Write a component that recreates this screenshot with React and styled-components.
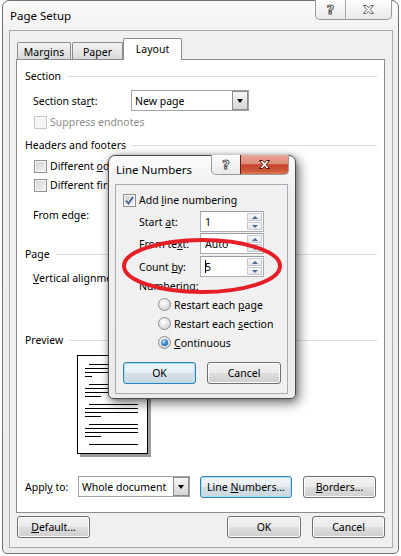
import React from "react";
import styled, { createGlobalStyle } from "styled-components";

const GlobalStyle = createGlobalStyle`
  html, body {
    margin: 0;
    padding: 0;
    background: #ffffff;
  }
  body {
    font-family: "Noto Sans", "Open Sans", sans-serif;
    font-size: 10.5px;
    color: #000;
  }
  #root {
    width: 401px;
    height: 556px;
    overflow: hidden;
  }
`;

const Frame = styled.div`
  box-sizing: border-box;
  display: flex;
  flex-direction: column;
  border: 1px solid ${({ $active }) => ($active ? "#4a4a4a" : "#707070")};
  border-radius: 7px 7px 5px 5px;
  background: linear-gradient(#fbfbfb, #efefef 36px, #ececec);
`;

const Window = styled(Frame)`
  position: relative;
  width: 397px;
  height: 554px;
  margin-left: 2px;
`;

const Dialog = styled(Frame)`
  position: absolute;
  left: 105px;
  top: 154px;
  width: 188px;
  height: 244px;
  z-index: 3;
  box-shadow: 3px 4px 12px rgba(0, 0, 0, 0.55), 0 0 4px rgba(0, 0, 0, 0.25);
`;

const TitleBar = styled.div`
  display: flex;
  justify-content: space-between;
  align-items: flex-start;
  flex: none;
  height: ${({ $h }) => $h}px;
`;

const Title = styled.div`
  padding: ${({ $top }) => $top}px 0 0 7px;
  line-height: 16px;
  font-size: 11.5px;
  white-space: nowrap;
`;

const Captions = styled.div`
  display: flex;
  margin: -1px 6px 0 0;
  height: 20px;
  box-sizing: border-box;
  border: 1px solid #9a9a9a;
  border-top: none;
  border-radius: 0 0 5px 5px;
  background: linear-gradient(#fdfdfd, #e9e9e9);
  overflow: hidden;
`;

const CaptionButton = styled.div`
  width: ${({ $w }) => $w}px;
  display: flex;
  align-items: center;
  justify-content: center;
  border-left: ${({ $divider }) => ($divider ? "1px solid #a8a8a8" : "none")};
`;

const CloseButton = styled(CaptionButton)`
  margin: 0 -1px -1px 0;
  border: 1px solid #6b1d12;
  border-top: none;
  border-radius: 0 0 5px 0;
  background: linear-gradient(#e9a799 0%, #dd8b78 45%, #c8432c 52%, #cf5a3a 85%, #e07a55 100%);
`;

const HelpGlyph = styled.span`
  font-family: "DejaVu Sans", sans-serif;
  font-weight: bold;
  font-size: 13px;
  line-height: 13px;
  color: #fff;
  -webkit-text-stroke: 1px #555;
`;

const Client = styled.div`
  box-sizing: border-box;
  flex: none;
  height: ${({ $h }) => $h}px;
  margin: 0 ${({ $mr }) => $mr}px ${({ $mb }) => $mb}px 6px;
  border: 1px solid #a5acb5;
  background: #f0f0f0;
  padding: ${({ $pad }) => $pad};
  display: flex;
  flex-direction: column;
`;

const TabRow = styled.div`
  display: flex;
  align-items: flex-end;
  height: 21px;
  padding-left: 1px;
  flex: none;
`;

const Tab = styled.div`
  position: relative;
  box-sizing: border-box;
  width: ${({ $w }) => $w}px;
  margin-left: ${({ $ml }) => $ml || 0}px;
  height: ${({ $active }) => ($active ? 22 : 17)}px;
  margin-bottom: ${({ $active }) => ($active ? -1 : 0)}px;
  padding-top: ${({ $active }) => ($active ? 3 : 2)}px;
  border: 1px solid #898c95;
  border-bottom: none;
  border-radius: 2px 2px 0 0;
  background: ${({ $active }) =>
    $active ? "#fff" : "linear-gradient(#f3f3f3, #e6e6e6 50%, #d9d9d9)"};
  text-align: center;
  line-height: 15px;
`;

const Panel = styled.div`
  box-sizing: border-box;
  height: 454px;
  background: #fff;
  border: 1px solid #898c95;
  padding: 7px 7px 0 8px;
  display: flex;
  flex-direction: column;
  flex: none;
`;

const Row = styled.div`
  display: flex;
  align-items: center;
  flex: none;
  height: ${({ $h }) => $h || 18}px;
  margin-top: ${({ $mt }) => $mt || 0}px;
  padding-left: ${({ $indent }) => $indent || 0}px;
  white-space: nowrap;
`;

const Rule = styled.div`
  flex: 1;
  height: 1px;
  margin-left: 6px;
  background: #d5dfe5;
`;

const Label = styled.span`
  flex: none;
  width: ${({ $w }) => ($w ? `${$w}px` : "auto")};
  color: ${({ $disabled }) => ($disabled ? "#8d8d8d" : "#000")};
  margin-left: ${({ $ml }) => $ml || 0}px;
`;

const Select = styled.div`
  box-sizing: border-box;
  flex: none;
  width: ${({ $w }) => $w}px;
  height: 21px;
  display: flex;
  align-items: center;
  border: 1px solid #a4a4a4;
  background: #fff;
  padding: 0 1px 0 3px;
`;

const SelectText = styled.span`
  flex: 1;
`;

const DropButton = styled.div`
  box-sizing: border-box;
  width: 16px;
  height: 19px;
  margin-right: -1px;
  border: 1px solid #8a8a8a;
  background: linear-gradient(#f6f6f6, #e4e4e4 50%, #d6d6d6);
  display: flex;
  align-items: center;
  justify-content: center;
  &::after {
    content: "";
    border-left: 3.5px solid transparent;
    border-right: 3.5px solid transparent;
    border-top: 4px solid #000;
  }
`;

const CheckBox = styled.span`
  box-sizing: border-box;
  flex: none;
  width: 13px;
  height: 13px;
  border: 1px solid ${({ $disabled }) => ($disabled ? "#c9c9c9" : "#8e8f8f")};
  box-shadow: inset 0 0 0 1px #f7f7f7;
  background: ${({ $disabled }) =>
    $disabled ? "#f4f4f4" : "linear-gradient(135deg, #cdd0d5, #f7f7f7)"};
  display: flex;
  align-items: center;
  justify-content: center;
`;

const RadioDot = styled.span`
  box-sizing: border-box;
  flex: none;
  width: 13px;
  height: 13px;
  border-radius: 50%;
  border: 1px solid #8e8f8f;
  background: radial-gradient(circle at 40% 35%, #ffffff, #d4d4d4 75%);
  display: flex;
  align-items: center;
  justify-content: center;
  &::after {
    content: "";
    display: ${({ $on }) => ($on ? "block" : "none")};
    width: 7px;
    height: 7px;
    border-radius: 50%;
    background: radial-gradient(circle at 40% 35%, #b9e4fb, #2d7ec4 55%, #1a4f8c);
  }
`;

const Button = styled.button`
  box-sizing: border-box;
  flex: none;
  width: ${({ $w }) => $w}px;
  height: 22px;
  margin-left: ${({ $ml }) => $ml || 0}px;
  padding: 0;
  font: inherit;
  color: #000;
  border: 1px solid ${({ $focus }) => ($focus ? "#3c7fb1" : "#707070")};
  border-radius: 3px;
  background: ${({ $focus }) =>
    $focus
      ? "linear-gradient(#f0f5f8, #e6edf1 50%, #d6e0e6 51%, #cbd6dd)"
      : "linear-gradient(#f2f2f2, #ebebeb 50%, #dddddd 51%, #cfcfcf)"};
  box-shadow: inset 0 0 0 1px ${({ $focus }) => ($focus ? "#9fe2fb" : "#fbfbfb")};
`;

const Spin = styled.div`
  box-sizing: border-box;
  flex: none;
  width: 64px;
  height: 21px;
  display: flex;
  padding: 1px;
  border: 1px solid #abadb3;
  border-top-color: #9a9ca3;
  background: #fff;
`;

const SpinValue = styled.span`
  flex: 1;
  display: flex;
  align-items: center;
  padding-left: 3px;
`;

const Caret = styled.span`
  width: 1px;
  height: 13px;
  background: #000;
  margin-right: -1px;
`;

const SpinButtons = styled.div`
  width: 15px;
  display: flex;
  flex-direction: column;
  gap: 1px;
`;

const SpinArrow = styled.div`
  flex: 1;
  box-sizing: border-box;
  border: 1px solid #c3cad3;
  background: linear-gradient(#f7f7f7, #e4e6e9);
  display: flex;
  align-items: center;
  justify-content: center;
  &::after {
    content: "";
    border-left: 3px solid transparent;
    border-right: 3px solid transparent;
    ${({ $down }) =>
      $down ? "border-top: 3px solid #4b6a9a;" : "border-bottom: 3px solid #4b6a9a;"}
  }
`;

const Footer = styled.div`
  display: flex;
  margin-top: 3px;
  padding-left: 1px;
`;

const Spacer = styled.div`
  flex: 1;
`;

const PreviewPage = styled.div`
  box-sizing: border-box;
  flex: none;
  width: 71px;
  height: 99px;
  margin: 6px 0 0 52px;
  border: 1px solid #000;
  background: #fff;
  box-shadow: 3px 3px 0 #9c9c9c;
`;

const Annotation = styled.svg`
  position: absolute;
  left: 115px;
  top: 235px;
  z-index: 4;
  pointer-events: none;
`;

const u = (s) => <u>{s}</u>;

function CloseX({ fill, stroke }) {
  return (
    <svg width="13" height="11" viewBox="0 0 13 11">
      <path
        d="M1.5 1.5 H4.5 L6.5 3.8 L8.5 1.5 H11.5 L8.2 5.5 L11.5 9.5 H8.5 L6.5 7.2 L4.5 9.5 H1.5 L4.8 5.5 Z"
        fill={fill}
        stroke={stroke}
        strokeWidth="1"
        strokeLinejoin="round"
      />
    </svg>
  );
}

function Tick() {
  return (
    <svg width="9" height="9" viewBox="0 0 9 9">
      <path d="M1 4.5 L3.5 7.5 L8 1" fill="none" stroke="#4a5f97" strokeWidth="1.8" />
    </svg>
  );
}

function Header({ children, mt }) {
  return (
    <Row $mt={mt}>
      <Label>{children}</Label>
      <Rule />
    </Row>
  );
}

function Check({ checked, disabled, children, mt, indent, h }) {
  return (
    <Row $mt={mt} $indent={indent} $h={h}>
      <CheckBox $disabled={disabled}>{checked && <Tick />}</CheckBox>
      <Label $ml={3} $disabled={disabled}>
        {children}
      </Label>
    </Row>
  );
}

function Radio({ on, children, mt }) {
  return (
    <Row $mt={mt} $indent={42} $h={19}>
      <RadioDot $on={on} />
      <Label $ml={3}>{children}</Label>
    </Row>
  );
}

function Spinner({ label, value, caret, mt }) {
  return (
    <Row $mt={mt} $indent={23} $h={21}>
      <Label $w={61}>{label}</Label>
      <Spin>
        <SpinValue>
          {caret && <Caret />}
          {value}
        </SpinValue>
        <SpinButtons>
          <SpinArrow />
          <SpinArrow $down />
        </SpinButtons>
      </Spin>
    </Row>
  );
}

const previewLines = [];
[9, 29, 49, 69].forEach((y, i) => {
  previewLines.push([12, y, 61]);
  previewLines.push([8, y + 4, 61]);
  previewLines.push([8, y + 8, 61]);
  previewLines.push([8, y + 12, i === 0 ? 15 : 24]);
});
previewLines.push([12, 89, 61]);

function Preview() {
  return (
    <PreviewPage>
      <svg width="69" height="97" viewBox="0 0 69 97">
        {previewLines.map(([x1, y, x2], i) => (
          <line key={i} x1={x1 - 1} x2={x2 - 1} y1={y - 0.5} y2={y - 0.5} stroke="#000" strokeWidth="1" />
        ))}
      </svg>
    </PreviewPage>
  );
}

function LineNumbersDialog() {
  return (
    <Dialog $active>
      <TitleBar $h={28}>
        <Title $top={6}>Line Numbers</Title>
        <Captions>
          <CaptionButton $w={28}>
            <HelpGlyph>?</HelpGlyph>
          </CaptionButton>
          <CloseButton $w={47}>
            <CloseX fill="#fff" stroke="#4a1208" />
          </CloseButton>
        </Captions>
      </TitleBar>
      <Client $h={210} $mr={7} $mb={4} $pad="0">
        <Check checked mt={6} indent={7}>
          Add {u("l")}ine numbering
        </Check>
        <Spinner mt={2} label={<>Start {u("a")}t:</>} value="1" />
        <Spinner mt={1} label={<>From te{u("x")}t:</>} value="Auto" />
        <Spinner mt={2} label={<>Count {u("b")}y:</>} value="5" caret />
        <Row $indent={23} $h={17}>
          <Label>Numbering:</Label>
        </Row>
        <Radio mt={1}>Restart each {u("p")}age</Radio>
        <Radio>Restart each {u("s")}ection</Radio>
        <Radio on>{u("C")}ontinuous</Radio>
        <Row $mt={10} $indent={7} $h={22}>
          <Button $w={73} $focus>
            OK
          </Button>
          <Button $w={74} $ml={11}>
            Cancel
          </Button>
        </Row>
      </Client>
    </Dialog>
  );
}

export default function App() {
  return (
    <>
      <GlobalStyle />
      <Window>
        <TitleBar $h={29}>
          <Title $top={7}>Page Setup</Title>
          <Captions>
            <CaptionButton $w={29}>
              <HelpGlyph>?</HelpGlyph>
            </CaptionButton>
            <CaptionButton $w={45} $divider>
              <CloseX fill="#fff" stroke="#666" />
            </CaptionButton>
          </Captions>
        </TitleBar>
        <Client $h={518} $mr={5} $mb={5} $pad="7px 7px 0 6px">
          <TabRow>
            <Tab $w={54}>Margins</Tab>
            <Tab $w={51} $ml={1}>
              Paper
            </Tab>
            <Tab $w={59} $active>
              Layout
            </Tab>
          </TabRow>
          <Panel>
            <Header>Section</Header>
            <Row $mt={5} $indent={8} $h={21}>
              <Label $w={98}>Section sta{u("r")}t:</Label>
              <Select $w={118}>
                <SelectText>New page</SelectText>
                <DropButton />
              </Select>
            </Row>
            <Check disabled mt={2} indent={9}>
              Suppress endnotes
            </Check>
            <Header mt={5}>Headers and footers</Header>
            <Check mt={3} indent={9}>
              Different {u("o")}dd and even
            </Check>
            <Check mt={1} indent={9}>
              Different first page
            </Check>
            <Row $mt={12} $indent={8}>
              <Label>From edge:</Label>
            </Row>
            <Header mt={21}>Page</Header>
            <Row $mt={6} $indent={8}>
              <Label $w={98}>{u("V")}ertical alignment:</Label>
            </Row>
            <Header mt={44}>Preview</Header>
            <Preview />
            <Row $mt={22} $h={21}>
              <Label $w={53}>Appl{u("y")} to:</Label>
              <Select $w={112}>
                <SelectText>Whole document</SelectText>
                <DropButton />
              </Select>
              <Button $w={92} $ml={10} $focus>
                Line {u("N")}umbers...
              </Button>
              <Button $w={73} $ml={11}>
                {u("B")}orders...
              </Button>
            </Row>
          </Panel>
          <Footer>
            <Button $w={73}>{u("D")}efault...</Button>
            <Spacer />
            <Button $w={74}>OK</Button>
            <Button $w={73} $ml={11}>
              Cancel
            </Button>
          </Footer>
        </Client>
        <LineNumbersDialog />
        <Annotation width="175" height="62" viewBox="0 0 175 62">
          <ellipse cx="84" cy="30" rx="78" ry="26" fill="none" stroke="#e61e28" strokeWidth="4" />
        </Annotation>
      </Window>
    </>
  );
}
